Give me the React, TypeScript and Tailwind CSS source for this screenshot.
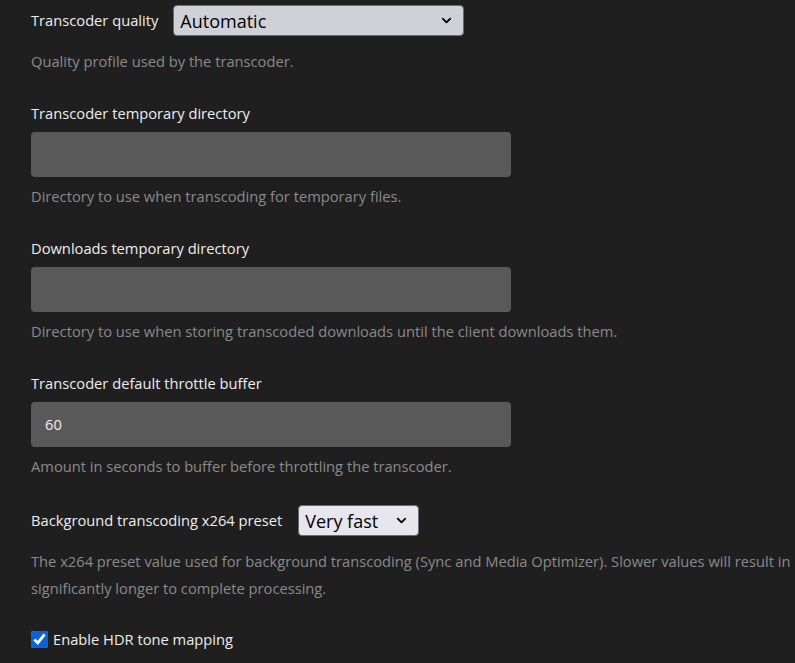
import { ChevronDown } from "lucide-react";

const DIRS = [
  {
    label: "Transcoder temporary directory",
    value: "",
    help: "Directory to use when transcoding for temporary files.",
  },
  {
    label: "Downloads temporary directory",
    value: "",
    help: "Directory to use when storing transcoded downloads until the client downloads them.",
  },
  {
    label: "Transcoder default throttle buffer",
    value: "60",
    help: "Amount in seconds to buffer before throttling the transcoder.",
  },
];

function Select({
  value,
  width,
  bg,
}: {
  value: string;
  width: string;
  bg: string;
}) {
  return (
    <div
      className={`flex h-[31px] items-center justify-between rounded-[4px] border border-[#6b6b70] pl-[6px] pr-[9px] ${width} ${bg}`}
    >
      <span className="text-[18px] leading-none text-black">{value}</span>
      <ChevronDown className="h-[15px] w-[15px] text-black" strokeWidth={3} />
    </div>
  );
}

export default function App() {
  return (
    <div className="h-screen overflow-hidden bg-[#1f1f1f] pl-[31px] pt-[5px] font-['Open_Sans','Noto_Sans',sans-serif] text-[14.7px]">
      {/* Quality */}
      <div className="flex items-center gap-[15px]">
        <span className="text-[#ededed]">Transcoder quality</span>
        <Select value="Automatic" width="w-[291px]" bg="bg-[#d0d1d7]" />
      </div>
      <p className="mt-[12px] leading-[27px] text-[#8a8a8a]">
        Quality profile used by the transcoder.
      </p>

      {/* Directories */}
      {DIRS.map((d) => (
        <div key={d.label} className="mt-[28px]">
          <div className="leading-[21px] text-[#ededed]">{d.label}</div>
          <div className="mt-[8px] flex h-[45px] w-[480px] items-center rounded-[4px] bg-[#595959] px-[14px] text-[#f0f0f0]">
            {d.value}
          </div>
          <p className="mt-[6px] leading-[27px] text-[#8a8a8a]">{d.help}</p>
        </div>
      ))}

      {/* Preset */}
      <div className="mt-[25px] flex items-center gap-[16px]">
        <span className="text-[#ededed]">Background transcoding x264 preset</span>
        <Select value="Very fast" width="w-[121px]" bg="bg-[#e6e6ec]" />
      </div>
      <p className="mt-[12px] whitespace-nowrap leading-[27px] text-[#8a8a8a]">
        The x264 preset value used for background transcoding (Sync and Media
        Optimizer). Slower values will result in
        <br />
        significantly longer to complete processing.
      </p>

      {/* HDR */}
      <label className="mt-[27px] flex items-center gap-[5px] leading-[20px] text-[#ededed]">
        <input
          type="checkbox"
          defaultChecked
          className="m-0 h-[17px] w-[17px] accent-[#0a64d8]"
        />
        Enable HDR tone mapping
      </label>
    </div>
  );
}
